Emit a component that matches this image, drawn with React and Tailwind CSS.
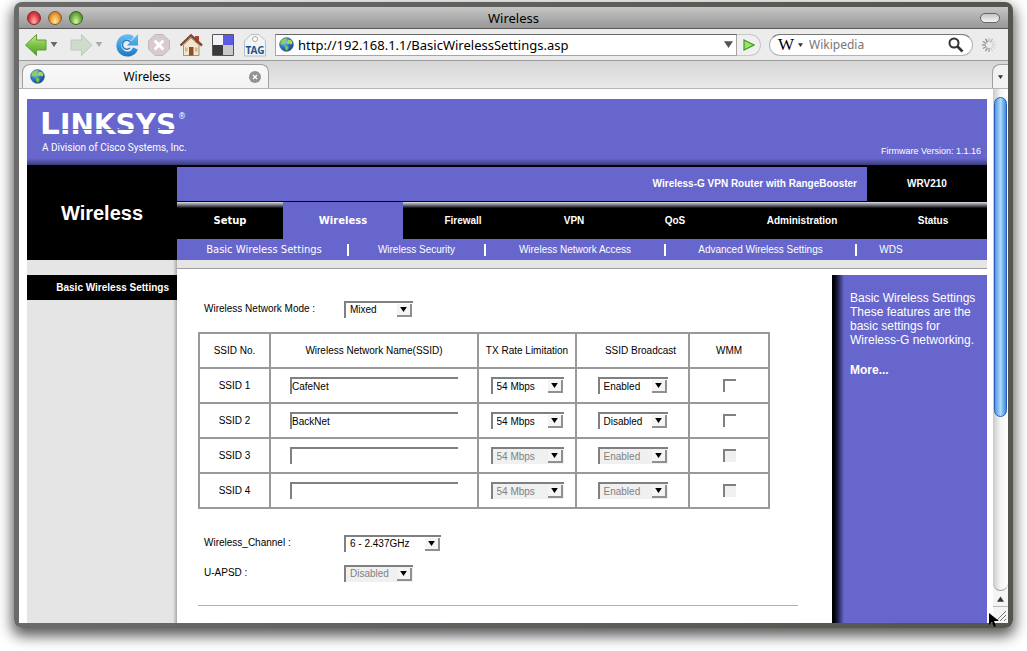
import { useState } from 'react'

const NAV = [
  { label: 'Setup', cls: 'w-[106px] font-["DejaVu_Sans",sans-serif]' },
  { label: 'Wireless', cls: 'w-[120px] font-["DejaVu_Sans",sans-serif]', active: true },
  { label: 'Firewall', cls: 'w-[120px]' },
  { label: 'VPN', cls: 'w-[102px]' },
  { label: 'QoS', cls: 'w-[100px]' },
  { label: 'Administration', cls: 'flex-1' },
  { label: 'Status', cls: 'w-[108px]' },
]

const SUBNAV = [
  { label: 'Basic Wireless Settings', cls: 'w-[170px] pl-1 font-["DejaVu_Sans",sans-serif]' },
  { label: 'Wireless Security', cls: 'w-[137px]' },
  { label: 'Wireless Network Access', cls: 'w-[180px]' },
  { label: 'Advanced Wireless Settings', cls: 'w-[191px]' },
  { label: 'WDS', cls: 'w-[70px]' },
]

const SSIDS = [
  { id: 1, name: 'CafeNet', broadcast: 'Enabled' },
  { id: 2, name: 'BackNet', broadcast: 'Disabled' },
  { id: 3, name: '', broadcast: 'Enabled', disabled: true },
  { id: 4, name: '', broadcast: 'Enabled', disabled: true },
]

const SPOKES = [0, 30, 60, 90, 120, 150, 180, 210, 240, 270, 300, 330]

function Caret({ className }) {
  return (
    <svg viewBox="0 0 8 6" className={className} aria-hidden="true">
      <path d="M0 0h8L4 6z" fill="currentColor" />
    </svg>
  )
}

function Globe({ className }) {
  return (
    <svg viewBox="0 0 16 16" className={className} aria-hidden="true">
      <defs>
        <radialGradient id="globe" cx="0.35" cy="0.3" r="0.8">
          <stop offset="0" stopColor="#9fd2f7" />
          <stop offset="0.5" stopColor="#2f78c4" />
          <stop offset="1" stopColor="#123a7c" />
        </radialGradient>
      </defs>
      <circle cx="8" cy="8" r="7.3" fill="url(#globe)" stroke="#2b5c96" strokeWidth="0.8" />
      <path d="M2 4.500C4 1.500 7 1 8.500 1.500L7.500 4 6 5l.5 2-2 1L3 7.500 1.500 8z" fill="#8ed04b" />
      <path d="M10 3l3 .5 1.500 3L13 8l-2-1-2 .5L8.500 5z" fill="#a6dc55" />
      <path d="M6 9l3 .5 1.500 2L9 14l-1.500.5L6.500 12z" fill="#7cc142" />
    </svg>
  )
}

function BackArrow() {
  return (
    <svg viewBox="0 0 24 24" className="size-6" aria-hidden="true">
      <defs>
        <linearGradient id="arrow" x1="0" y1="0" x2="0" y2="1">
          <stop offset="0" stopColor="#c4ea9c" />
          <stop offset="0.5" stopColor="#7dc443" />
          <stop offset="1" stopColor="#4f9f25" />
        </linearGradient>
      </defs>
      <path d="M0.500 12L11.500 1.500V7H21v10h-9.500v5.500z" fill="url(#arrow)" stroke="#5d9c3b" strokeLinejoin="round" />
    </svg>
  )
}

function ForwardArrow() {
  return (
    <svg viewBox="0 0 24 24" className="size-6" aria-hidden="true">
      <path d="M22 12L11.500 1.500V7H1v10h10.500v5.500z" fill="#cfdccb" stroke="#bccab9" strokeLinejoin="round" />
    </svg>
  )
}

function ReloadIcon() {
  return (
    <svg viewBox="0 0 24 24" className="size-6" aria-hidden="true">
      <defs>
        <linearGradient id="reload" gradientUnits="userSpaceOnUse" x1="0" y1="0" x2="0" y2="24">
          <stop offset="0" stopColor="#6cc4f5" />
          <stop offset="1" stopColor="#1577c9" />
        </linearGradient>
      </defs>
      <path d="M20.500 15.500A8.600 8.600 0 1 1 17.500 5.500" fill="none" stroke="url(#reload)" strokeWidth="5" />
      <path d="M23 1v11.500H12z" fill="url(#reload)" />
      <path d="M15.500 9A4.500 4.500 0 1 0 15 15" fill="none" stroke="#1a80cf" strokeWidth="1.500" />
    </svg>
  )
}

function StopIcon() {
  return (
    <svg viewBox="0 0 24 24" className="size-6" aria-hidden="true">
      <path d="M8 1.500h8L22.500 8v8L16 22.500H8L1.500 16V8z" fill="#d9cbcd" stroke="#c4b5b8" />
      <path d="M8.500 8.500l7 7M15.500 8.500l-7 7" stroke="#fff" strokeWidth="3" strokeLinecap="round" />
    </svg>
  )
}

function HomeIcon() {
  return (
    <svg viewBox="0 0 24 24" className="size-6" aria-hidden="true">
      <path d="M16 3h4v7h-4z" fill="#b5422d" />
      <path d="M4.500 12L12 5l8 7v10.500H4.500z" fill="#f3e6cd" stroke="#9c7a58" strokeWidth="0.8" />
      <path d="M1.500 12.500L12 2.500l11 10" fill="none" stroke="#7c4b31" strokeWidth="2.400" />
      <path d="M10 14h4.500v8.500H10z" fill="#8b4f2c" />
      <path d="M16 14.500h2.500v4H16zM6 14.500h2.500v4H6z" fill="#d5b58d" />
    </svg>
  )
}

function SquaresIcon() {
  return (
    <svg viewBox="0 0 24 24" className="size-6" aria-hidden="true">
      <path d="M1 1h22v22H1z" fill="#fff" />
      <path d="M2 2h10v10H2z" fill="#f1f1f7" />
      <path d="M12 2h10v10H12z" fill="#5a5ae4" />
      <path d="M2 12h10v10H2z" fill="#3a3a3a" />
      <path d="M12 12h10v10H12z" fill="#c9c9cb" />
      <path d="M1.500 1.500h21v21h-21z" fill="none" stroke="#555" />
    </svg>
  )
}

function TagIcon() {
  return (
    <svg viewBox="0 0 24 24" className="size-6" aria-hidden="true">
      <path d="M1.500 23V8L8 1.500h8L22.500 8v15z" fill="#f4f4f4" stroke="#bdbdbd" />
      <circle cx="12" cy="6" r="2.500" fill="#fff" stroke="#aaa" />
      <text x="12" y="21" textAnchor="middle" fontSize="10" fontWeight="700" fill="#17578f" fontFamily="Noto Sans, sans-serif">
        TAG
      </text>
    </svg>
  )
}

function Spinner() {
  return (
    <svg viewBox="0 0 16 16" className="size-4" aria-hidden="true">
      {SPOKES.map((deg) => (
        <path
          key={deg}
          d="M8 1v4"
          stroke="#777"
          strokeWidth="1.300"
          opacity={deg > 30 && deg < 180 ? 0.2 : 0.4 + deg / 700}
          transform={`rotate(${deg} 8 8)`}
        />
      ))}
    </svg>
  )
}

function TitleBar() {
  return (
    <div className="flex h-[22px] items-center border-b border-[#5a5a5a] bg-linear-to-b from-[#c6c6c6] to-[#979797] px-2">
      <div className="flex flex-1 gap-[7px]">
        <button aria-label="Close" className="size-3.5 rounded-full border border-[#7d2a2a] bg-radial-[at_50%_80%] from-[#ffb5ae] via-[#e8434a] to-[#8f1a20]" />
        <button aria-label="Minimize" className="size-3.5 rounded-full border border-[#86592a] bg-radial-[at_50%_80%] from-[#ffeaa0] via-[#f2a13c] to-[#9a5a14]" />
        <button aria-label="Zoom" className="size-3.5 rounded-full border border-[#3b6626] bg-radial-[at_50%_80%] from-[#d8f7a5] via-[#76b848] to-[#376b1c]" />
      </div>
      <span className="text-[13px] leading-4 text-black">Wireless</span>
      <div className="flex flex-1 justify-end">
        <button aria-label="Toggle toolbar" className="h-2.5 w-5 rounded-full border border-[#666] bg-linear-to-b from-[#c4c4c4] to-[#f4f4f4]" />
      </div>
    </div>
  )
}

function Toolbar() {
  const [url, setUrl] = useState('http://192.168.1.1/BasicWirelessSettings.asp')
  return (
    <div className="flex h-8 items-center gap-2 border-b border-[#9c9c9c] bg-[#ececec] pr-[11px] pl-1.5">
      <div className="flex gap-[11px]">
        <button aria-label="Back" className="flex w-[34px] items-center gap-px">
          <BackArrow />
          <Caret className="h-[5px] w-2 text-[#666]" />
        </button>
        <button aria-label="Forward" className="flex w-[34px] items-center gap-px">
          <ForwardArrow />
          <Caret className="h-[5px] w-2 text-[#aaa]" />
        </button>
        <button aria-label="Reload"><ReloadIcon /></button>
      </div>
      <button aria-label="Stop"><StopIcon /></button>
      <button aria-label="Home"><HomeIcon /></button>
      <button aria-label="Bookmarks"><SquaresIcon /></button>
      <button aria-label="Tag"><TagIcon /></button>
      <div className="flex h-[22px] flex-1">
        <div className="flex flex-1 items-center gap-1 border border-[#a5a5a5] border-t-[#666] bg-white px-[3px]">
          <Globe className="size-[15px]" />
          <input
            aria-label="Address"
            value={url}
            onChange={(e) => setUrl(e.target.value)}
            className="min-w-0 flex-1 text-[13px] leading-4 text-black outline-none"
          />
          <Caret className="h-[7px] w-[9px] text-[#555]" />
        </div>
        <button aria-label="Go" className="flex w-6 items-center justify-center rounded-r-full border border-l-0 border-[#c8c8c8] bg-[#f0f0f0]">
          <svg viewBox="0 0 12 12" className="size-3" aria-hidden="true">
            <path d="M1 1l10 5-10 5z" fill="#9be46a" stroke="#35a01c" strokeWidth="1.200" />
          </svg>
        </button>
      </div>
      <div className="flex h-[22px] w-[204px] items-center gap-1 rounded-full border border-[#b5b5b5] border-t-[#777] bg-white px-2">
        <span className="font-['Liberation_Serif',serif] text-[17px] leading-5 text-black">W</span>
        <Caret className="h-1 w-[5px] text-[#333]" />
        <input
          aria-label="Search Wikipedia"
          placeholder="Wikipedia"
          className="ml-0.5 min-w-0 flex-1 text-[12px] leading-4 outline-none placeholder:text-[#777]"
        />
        <button aria-label="Search">
          <svg viewBox="0 0 16 16" className="size-4" aria-hidden="true">
            <circle cx="6" cy="6" r="4.500" fill="none" stroke="#333" strokeWidth="2" />
            <path d="M9.500 9.500l5 5" stroke="#333" strokeWidth="2.600" />
          </svg>
        </button>
      </div>
      <Spinner />
    </div>
  )
}

function TabStrip() {
  return (
    <div className="flex h-7 items-end justify-between border-b border-[#b5b5b5] bg-linear-to-b from-[#d6d6d6] to-[#e9e9e9] pl-[3px]">
      <div className="flex h-6 w-[247px] items-center rounded-t-lg border border-b-0 border-[#a0a0a0] bg-linear-to-b from-[#fafafa] to-[#f2f2f2] px-[7px]">
        <Globe className="size-[15px]" />
        <span className="flex-1 text-center text-[12px] leading-4 text-black">Wireless</span>
        <button aria-label="Close tab">
          <svg viewBox="0 0 12 12" className="size-3" aria-hidden="true">
            <circle cx="6" cy="6" r="6" fill="#929292" />
            <path d="M4 4l4 4M8 4L4 8" stroke="#fff" strokeWidth="1.300" />
          </svg>
        </button>
      </div>
      <button aria-label="List tabs" className="flex h-6 w-4 items-center justify-center rounded-tl-lg border-t border-l border-[#a0a0a0] bg-[#f2f2f2]">
        <Caret className="h-1 w-[5px] text-[#333]" />
      </button>
    </div>
  )
}

function Scrollbar() {
  return (
    <div className="flex w-[15px] flex-col bg-[#f4f4f4]">
      <div className="flex-1 rounded-b-full border-b border-[#999] bg-linear-to-r from-[#c9c9c9] via-[#f5f5f5] to-[#fff] px-px pt-2">
        <div className="h-[320px] rounded-full border border-[#2a5bb8] bg-linear-to-r from-[#5b94e4] via-[#a9dcfb] to-[#3f87e0]" />
      </div>
      <div className="flex h-4 items-center justify-center border-b border-[#bbb]">
        <Caret className="h-1.5 w-[7px] rotate-180 text-[#333]" />
      </div>
      <svg viewBox="0 0 15 16" className="h-4 w-[15px]" aria-hidden="true">
        <path d="M3 14L13 4M7 14l6-6M11 14l2-2" stroke="#777" />
      </svg>
    </div>
  )
}

function Select({ width, value, options = [], disabled, ...rest }) {
  return (
    <span className={`relative inline-block h-[17px] ${width}`}>
      <select
        {...rest}
        defaultValue={value}
        disabled={disabled}
        className="block h-[17px] w-full appearance-none border-t-2 border-l-2 border-[#808080] bg-white pl-1 text-[10px] leading-[14px] text-black disabled:bg-[#f0f0f0] disabled:text-[#808080] disabled:opacity-100"
      >
        <option>{value}</option>
        {options.map((o) => (
          <option key={o}>{o}</option>
        ))}
      </select>
      <span className="pointer-events-none absolute top-[3px] right-px flex h-[13px] w-[15px] items-center justify-center border-r-2 border-b-2 border-[#909090] bg-[#f4f4f4]">
        <Caret className="h-[5px] w-[9px] text-black" />
      </span>
    </span>
  )
}

function SsidRow({ ssid }) {
  const cell = 'border-2 border-[#999] p-0'
  const other = ssid.broadcast === 'Enabled' ? 'Disabled' : 'Enabled'
  return (
    <tr className="h-[35px]">
      <td className={cell}>SSID {ssid.id}</td>
      <td className={cell}>
        <input
          aria-label={`SSID ${ssid.id} name`}
          defaultValue={ssid.name}
          disabled={ssid.disabled}
          className="mx-auto block h-[17px] w-[168px] border-t-2 border-l-2 border-[#808080] bg-white text-[10px] leading-[14px] text-black"
        />
      </td>
      <td className={cell}>
        <Select aria-label={`SSID ${ssid.id} rate`} width="w-[73px] align-middle" value="54 Mbps" disabled={ssid.disabled} />
      </td>
      <td className={cell}>
        <Select
          aria-label={`SSID ${ssid.id} broadcast`}
          width="w-[70px] align-middle"
          value={ssid.broadcast}
          options={[other]}
          disabled={ssid.disabled}
        />
      </td>
      <td className={cell}>
        <input
          type="checkbox"
          aria-label={`SSID ${ssid.id} WMM`}
          disabled={ssid.disabled}
          className="mx-auto block size-[13px] appearance-none border-t-2 border-l-2 border-[#808080] bg-white checked:bg-[#808080] disabled:bg-[#f0f0f0]"
        />
      </td>
    </tr>
  )
}

function SettingsForm() {
  const th = 'border-2 border-[#999] p-0 font-normal'
  return (
    <main className="min-w-0 flex-1 bg-white pt-[25px] pr-[34px] pl-[21px] text-[10px] leading-3 text-black">
      <div className="flex h-[30px] items-center pl-1.5">
        <label htmlFor="mode" className="w-[140px]">Wireless Network Mode :</label>
        <Select id="mode" width="w-[69px]" value="Mixed" />
      </div>
      <table className="mt-2 w-[571px] table-fixed border-collapse text-center">
        <colgroup>
          <col className="w-[71px]" />
          <col className="w-[208px]" />
          <col className="w-[98px]" />
          <col className="w-[113px]" />
          <col className="w-[80px]" />
        </colgroup>
        <thead>
          <tr className="h-[35px]">
            <th className={th}>SSID No.</th>
            <th className={th}>Wireless Network Name(SSID)</th>
            <th className={th}>TX Rate Limitation</th>
            <th className={`${th} pl-4`}>SSID Broadcast</th>
            <th className={th}>WMM</th>
          </tr>
        </thead>
        <tbody>
          {SSIDS.map((ssid) => (
            <SsidRow key={ssid.id} ssid={ssid} />
          ))}
        </tbody>
      </table>
      <div className="mt-[19px] flex h-[30px] items-center pl-1.5">
        <label htmlFor="channel" className="w-[140px]">Wireless_Channel :</label>
        <Select id="channel" width="w-[97px]" value="6 - 2.437GHz" />
      </div>
      <div className="flex h-[30px] items-center pl-1.5">
        <label htmlFor="apsd" className="w-[140px]">U-APSD :</label>
        <Select id="apsd" width="w-[69px]" value="Disabled" disabled />
      </div>
      <hr className="mt-[17px] border-[#b0b0cc]" />
    </main>
  )
}

function RouterHeader() {
  return (
    <>
      <header className="flex h-[66px] items-end justify-between bg-linear-to-b from-[#6666cc] from-90% to-[#3c3c7c] pr-1.5 pl-[15px] text-white">
        <div className="pb-[11px]">
          <svg viewBox="0 0 150 40" className="h-10 w-[150px] overflow-visible" role="img" aria-label="Linksys">
            <g fill="#fff" fontFamily="DejaVu Sans, sans-serif">
              <text x="-2" y="32" fontSize="31" fontWeight="700">L</text>
              <text x="18" y="32" fontSize="28" fontWeight="700">INKSYS</text>
              <text x="136" y="17" fontSize="8">®</text>
            </g>
            <path d="M19 27.500h118" stroke="#6666cc" />
          </svg>
          <p className="font-['Roboto',sans-serif] text-[10px] leading-3">A Division of Cisco Systems, Inc.</p>
        </div>
        <p className="pb-2 text-[9px] leading-3">Firmware Version: 1.1.16</p>
      </header>
      <div className="flex bg-black text-[10px] leading-3 text-white">
        <h1 className="flex w-[150px] items-center justify-center text-[20px] leading-6 font-bold">Wireless</h1>
        <div className="min-w-0 flex-1 pt-0.5">
          <div className="flex h-[34px] font-bold">
            <div className="flex flex-1 items-center justify-end bg-[#6666cc] pr-2.5">
              Wireless-G VPN Router with RangeBooster
            </div>
            <div className="flex w-[120px] items-center justify-center">WRV210</div>
          </div>
          <nav className="mt-px flex h-[37px] font-bold">
            {NAV.map((item) => (
              <a
                key={item.label}
                href="#"
                className={`flex items-center justify-center ${item.cls} ${
                  item.active
                    ? 'bg-[#6666cc]'
                    : 'bg-linear-to-b from-[#e0e0e0] via-[#55555f] via-[4px] to-black to-[7px]'
                }`}
              >
                {item.label}
              </a>
            ))}
          </nav>
          <nav className="flex h-[21px] items-center bg-[#6666cc]">
            {SUBNAV.map((item, i) => (
              <a
                key={item.label}
                href="#"
                className={`flex h-3 items-center justify-center ${item.cls} ${i > 0 ? 'border-l-2 border-white' : ''}`}
              >
                {item.label}
              </a>
            ))}
          </nav>
        </div>
      </div>
    </>
  )
}

export default function App() {
  return (
    <div className="flex min-h-screen flex-col bg-white px-3.5 pt-0.5 pb-[23px] font-['Noto_Sans',sans-serif]">
      <div className="flex flex-1 flex-col rounded-lg bg-linear-to-r from-[#6a6a6a] to-[#54554e] p-[5px] shadow-[0_6px_14px_2px_rgba(0,0,0,0.65)]">
        <TitleBar />
        <Toolbar />
        <TabStrip />
        <div className="relative flex flex-1 bg-white">
          <div className="flex min-w-0 flex-1 flex-col pt-2.5 pr-1.5 pl-2 font-['Liberation_Sans',sans-serif]">
            <RouterHeader />
            <div className="flex flex-1">
              <aside className="w-[150px] bg-linear-to-l from-[#aaa] to-[#e5e5e5] to-[4px] pt-[15px]">
                <a href="#" className="flex h-[25px] items-center justify-end bg-black pr-2 text-[10px] leading-3 font-bold text-white">
                  Basic Wireless Settings
                </a>
              </aside>
              <div className="flex min-w-0 flex-1 flex-col">
                <div className="h-[9px] border-b border-[#a0a0a0] bg-[#e5e5e5]" />
                <div className="flex flex-1">
                  <SettingsForm />
                  <aside className="mt-1.5 w-[155px] bg-linear-to-r from-black to-[#6666cc] to-[12px] pt-4 pl-[18px] text-[12px] leading-[14px] text-white">
                    <p>
                      Basic Wireless Settings
                      <br />
                      These features are the
                      <br />
                      basic settings for
                      <br />
                      Wireless-G networking.
                    </p>
                    <a href="#" className="mt-4 block font-bold">More...</a>
                  </aside>
                </div>
              </div>
            </div>
          </div>
          <Scrollbar />
          <svg viewBox="0 0 10 14" className="absolute right-[9px] -bottom-1 h-3.5 w-2.5" aria-hidden="true">
            <path d="M0 0v12l3-3 2 5 2-1-2-5h5z" fill="#000" />
          </svg>
        </div>
      </div>
    </div>
  )
}
